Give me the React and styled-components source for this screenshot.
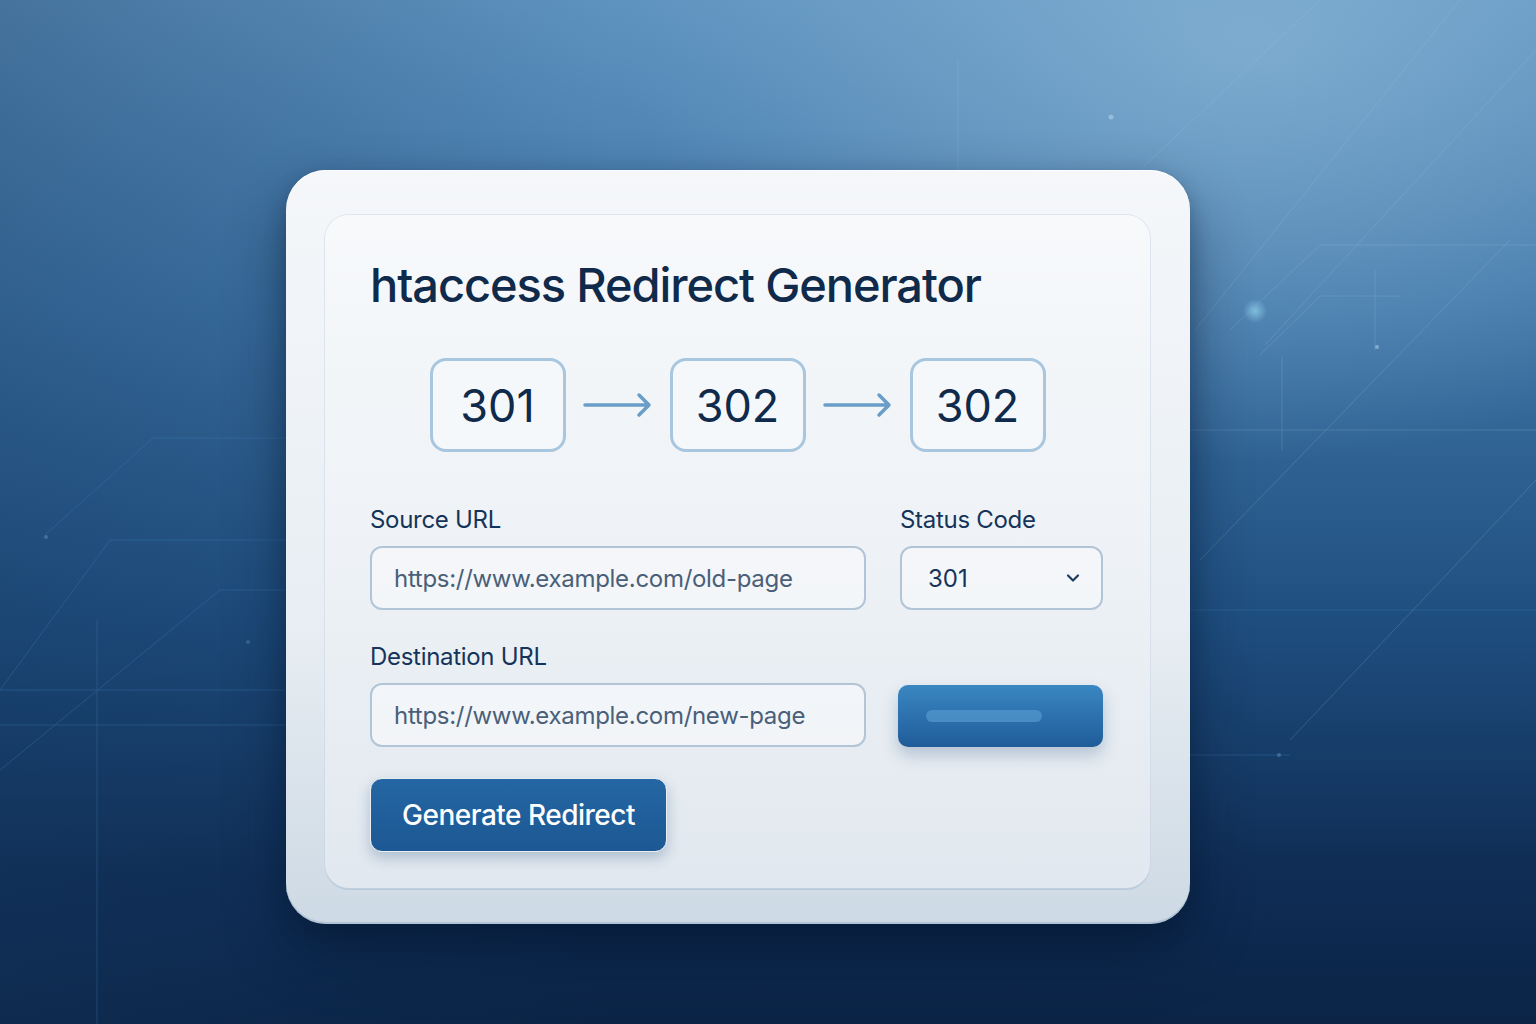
import React from 'react';
import styled, { createGlobalStyle } from 'styled-components';
import { ChevronDown } from 'lucide-react';

const GlobalStyle = createGlobalStyle`
  * { box-sizing: border-box; }
  html, body { margin: 0; padding: 0; }
  body {
    font-family: Inter, "Noto Sans", sans-serif;
    color: #0f2a4a;
  }
`;

const STEPS = ['301', '302', '302'];

// faint circuit lines and glints behind the card
const Backdrop = () => (
  <BackdropSvg viewBox="0 0 1536 1024" preserveAspectRatio="none">
    <defs>
      <radialGradient id="glow" cx="0.5" cy="0.5" r="0.5">
        <stop offset="0" stopColor="#8fd0ec" stopOpacity="0.75" />
        <stop offset="1" stopColor="#8fd0ec" stopOpacity="0" />
      </radialGradient>
    </defs>
    <g stroke="#a9cbe6" strokeWidth="1" fill="none" opacity="0.2">
      <path d="M1140 170 L1320 0" />
      <path d="M1265 345 L1536 50" />
      <path d="M1195 330 L1460 0" />
      <path d="M1230 330 L1320 245 L1536 245" />
      <path d="M1260 355 L1320 296 L1400 296" />
      <path d="M1200 560 L1510 240" />
      <path d="M1290 740 L1536 480" />
      <path d="M1190 430 L1536 430" />
      <path d="M958 60 L958 170" />
      <path d="M1375 270 L1375 350" />
      <path d="M1282 357 L1282 450" />
    </g>
    <g stroke="#3f7fb8" strokeWidth="1" fill="none" opacity="0.35">
      <path d="M45 535 L153 438 L286 438" />
      <path d="M0 690 L110 540 L286 540" />
      <path d="M97 620 L97 1024" />
      <path d="M0 690 L286 690" />
      <path d="M0 725 L286 725" />
      <path d="M0 770 L220 590 L286 590" />
      <path d="M1190 610 L1536 610" />
      <path d="M1190 755 L1290 755" />
    </g>
    <circle cx="1255" cy="311" r="12" fill="url(#glow)" />
    <circle cx="1111" cy="117" r="2.5" fill="#b8dcf0" opacity="0.5" />
    <circle cx="1377" cy="347" r="2" fill="#b8dcf0" opacity="0.5" />
    <circle cx="46" cy="537" r="2" fill="#5a94c8" opacity="0.5" />
    <circle cx="248" cy="642" r="2" fill="#5a94c8" opacity="0.4" />
    <circle cx="1279" cy="755" r="2" fill="#5a94c8" opacity="0.5" />
  </BackdropSvg>
);

const FlowArrow = () => (
  <svg width="70" height="30" viewBox="0 0 70 30" fill="none">
    <path
      d="M2 15 H66 M56 5 L66 15 L56 25"
      stroke="#6a9ec8"
      strokeWidth="3.5"
      strokeLinecap="round"
      strokeLinejoin="round"
    />
  </svg>
);

const App = () => (
  <>
    <GlobalStyle />
    <Page>
      <Backdrop />
      <OuterCard>
        <Panel>
          <Title>htaccess Redirect Generator</Title>

          <StepRow>
            {STEPS.map((code, i) => (
              <React.Fragment key={i}>
                {i > 0 && <FlowArrow />}
                <StepBox>{code}</StepBox>
              </React.Fragment>
            ))}
          </StepRow>

          <FormGrid>
            <Field>
              <Label>Source URL</Label>
              <TextInput>https://www.example.com/old-page</TextInput>
            </Field>
            <Field>
              <Label>Status Code</Label>
              <Select>
                <span>301</span>
                <ChevronDown size={20} strokeWidth={2.6} color="#1c3a5e" />
              </Select>
            </Field>
            <Field>
              <Label>Destination URL</Label>
              <TextInput>https://www.example.com/new-page</TextInput>
            </Field>
            <Field $alignEnd>
              <BlueBlock>
                <BlockBar />
              </BlueBlock>
            </Field>
          </FormGrid>

          <GenerateButton>Generate Redirect</GenerateButton>
        </Panel>
      </OuterCard>
    </Page>
  </>
);

const Page = styled.div`
  position: relative;
  width: 1536px;
  height: 1024px;
  overflow: hidden;
  padding: 170px 0 0 286px;
  background:
    radial-gradient(ellipse 900px 600px at 1250px 40px, rgba(140, 184, 216, 0.7), rgba(140, 184, 216, 0) 70%),
    linear-gradient(90deg, rgba(20, 55, 95, 0.35) 0%, rgba(20, 55, 95, 0) 40%),
    linear-gradient(180deg, #5f93bf 0%, #3f75a6 30%, #1f4f80 60%, #0f2d55 85%, #0b2446 100%);
`;

const BackdropSvg = styled.svg`
  position: absolute;
  inset: 0;
  width: 100%;
  height: 100%;
  pointer-events: none;
`;

const OuterCard = styled.div`
  position: relative;
  width: 904px;
  height: 754px;
  padding: 45px 40px 36px 39px;
  border-radius: 40px;
  background: linear-gradient(180deg, #f5f7fa 0%, #e8eef3 60%, #cdd9e4 100%);
  box-shadow:
    inset 0 1px 0 rgba(255, 255, 255, 0.9),
    inset 0 -2px 0 rgba(150, 175, 200, 0.5),
    0 30px 60px rgba(5, 20, 45, 0.45),
    0 8px 20px rgba(5, 20, 45, 0.25);
`;

const Panel = styled.div`
  height: 100%;
  padding: 40px 45px 0 45px;
  border-radius: 24px;
  background: linear-gradient(180deg, #f7f9fb 0%, #eef2f6 50%, #e1e8ef 100%);
  box-shadow:
    0 0 0 1px rgba(200, 212, 225, 0.5),
    0 2px 0 rgba(170, 190, 210, 0.6);
  display: flex;
  flex-direction: column;
`;

const Title = styled.h1`
  margin: 0;
  font-size: 47px;
  font-weight: 500;
  letter-spacing: -1.1px;
  line-height: 60px;
  color: #0f2a4a;
`;

const StepRow = styled.div`
  margin-top: 43px;
  display: flex;
  align-items: center;
  justify-content: center;
  gap: 17px;
`;

const StepBox = styled.div`
  width: 136px;
  height: 94px;
  border: 3px solid #a8c6de;
  border-radius: 16px;
  background: #f5f8fb;
  display: flex;
  align-items: center;
  justify-content: center;
  font-size: 45px;
  font-weight: 400;
  color: #0f2a4a;
`;

const FormGrid = styled.div`
  margin-top: 54px;
  display: grid;
  grid-template-columns: 496px 203px;
  column-gap: 34px;
  row-gap: 33px;
`;

const Field = styled.div`
  display: flex;
  flex-direction: column;
  gap: 12px;
  justify-content: ${(p) => (p.$alignEnd ? 'flex-end' : 'flex-start')};
`;

const Label = styled.div`
  font-size: 24px;
  line-height: 28px;
  color: #15345a;
  letter-spacing: -0.3px;
`;

const InputBox = styled.div`
  height: 64px;
  border: 2px solid #b2c5d6;
  border-radius: 12px;
  background: rgba(246, 248, 251, 0.7);
  display: flex;
  align-items: center;
  font-size: 24px;
`;

const TextInput = styled(InputBox)`
  padding: 0 22px;
  color: #4a5f78;
  letter-spacing: -0.3px;
`;

const Select = styled(InputBox)`
  padding: 0 18px 0 26px;
  justify-content: space-between;
  color: #15345a;
`;

const BlueBlock = styled.div`
  height: 62px;
  margin-left: -2px;
  border-radius: 10px;
  background: linear-gradient(180deg, #3a87c2 0%, #2a6dab 60%, #1f5c98 100%);
  box-shadow: 0 8px 16px rgba(30, 70, 120, 0.25);
  display: flex;
  align-items: center;
  padding-left: 28px;
`;

const BlockBar = styled.div`
  width: 116px;
  height: 12px;
  border-radius: 6px;
  background: #4d93c9;
  opacity: 0.85;
`;

const GenerateButton = styled.button`
  margin-top: 31px;
  width: 297px;
  height: 74px;
  border: 1px solid #e9eef3;
  border-radius: 12px;
  background: linear-gradient(180deg, #2466a3 0%, #1c5894 100%);
  box-shadow: 0 6px 14px rgba(20, 60, 110, 0.25);
  color: #ffffff;
  font-family: Inter, "Noto Sans", sans-serif;
  font-size: 28px;
  font-weight: 500;
  letter-spacing: -0.5px;
  cursor: pointer;
`;

export default App;
